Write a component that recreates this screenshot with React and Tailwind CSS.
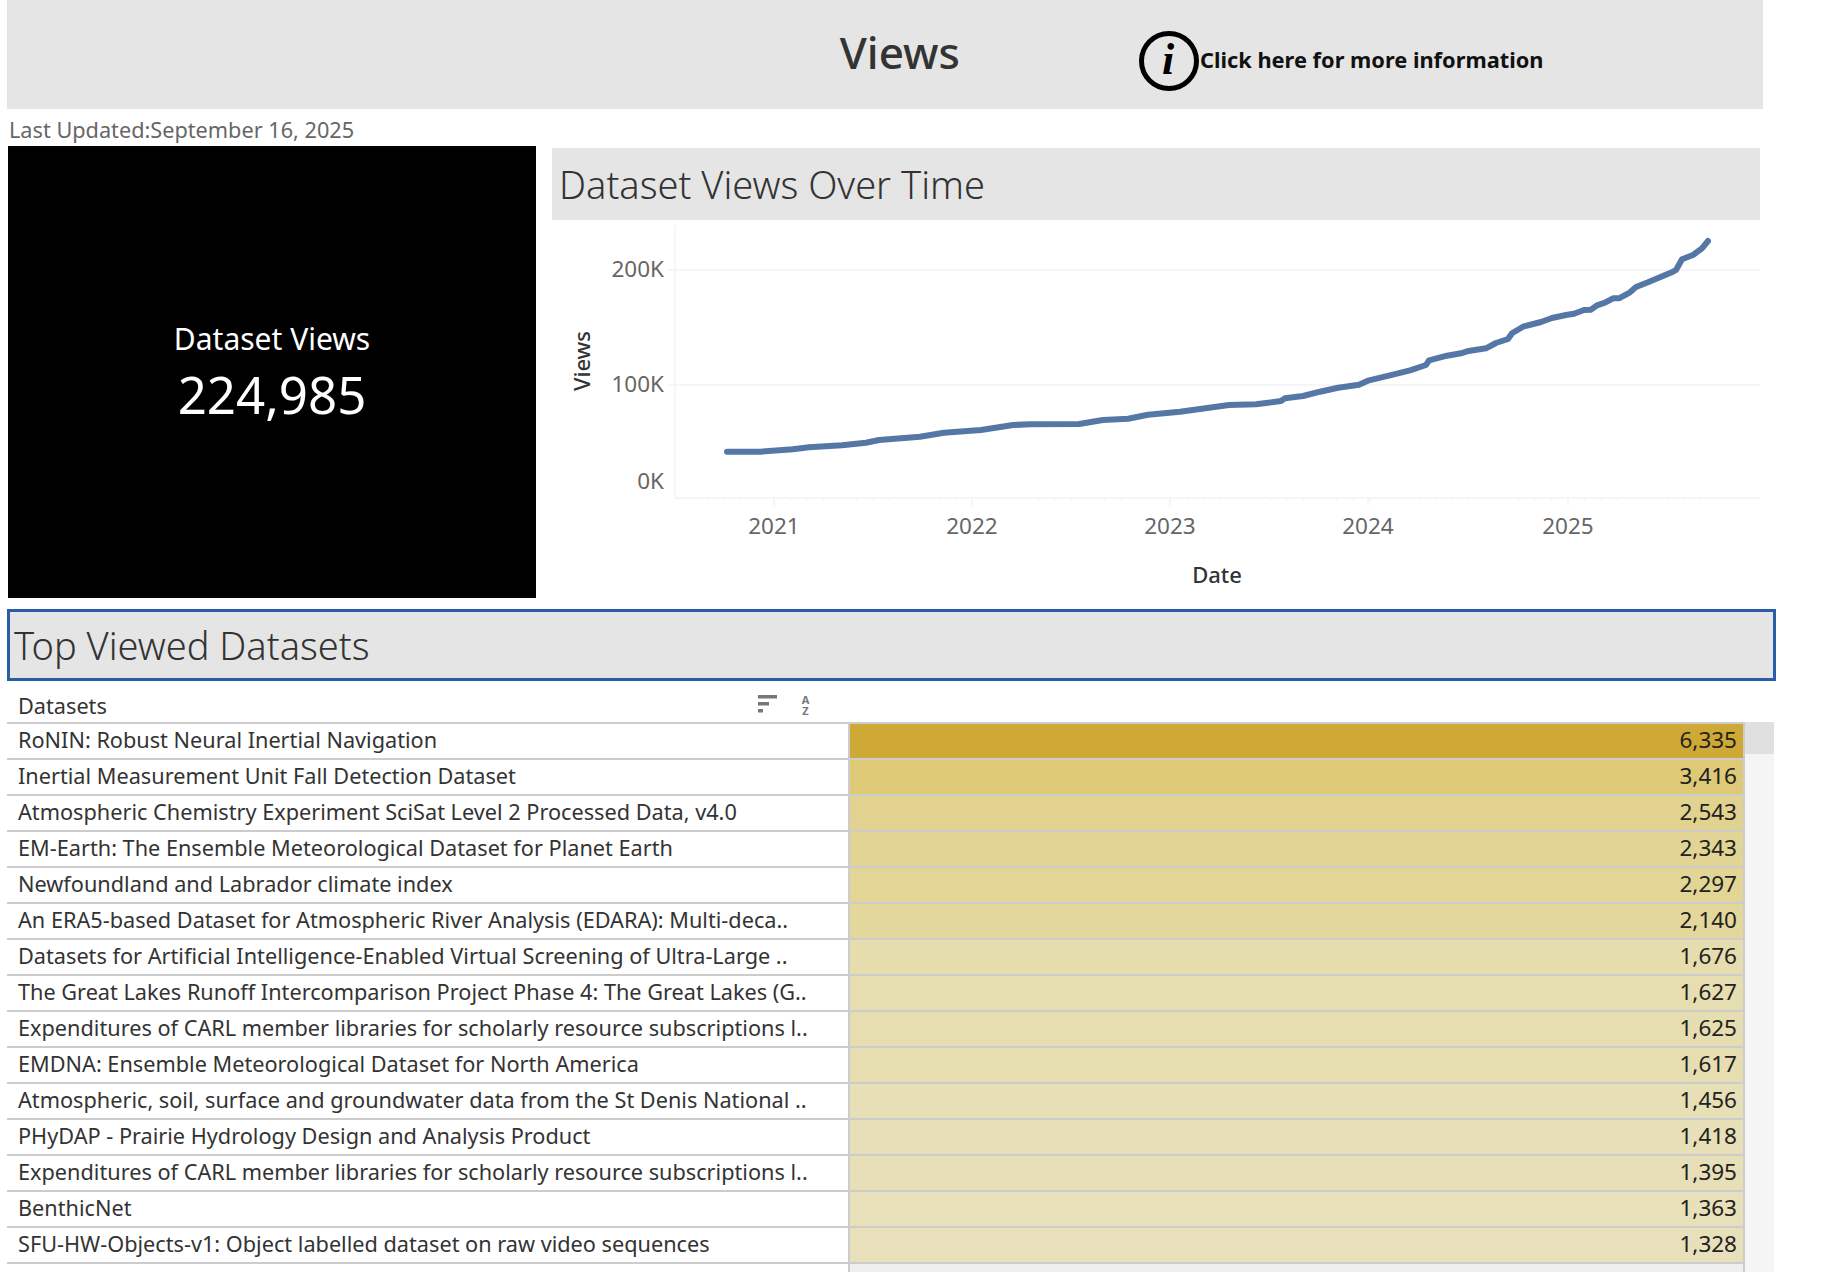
import React from 'react';

const font = "font-['Noto_Sans',sans-serif]";

const linePoints = [
    [727, 451.7], [760, 451.7], [793, 449.3], [809, 447.3], [842, 445.3], [866, 442.7], [879, 440], [920, 436.7],
    [944, 432.7], [981, 430], [1013, 425], [1030, 424.3], [1079, 424], [1103, 420], [1128, 418.7], [1148, 414.7],
    [1180, 411.7], [1200, 409], [1229, 405], [1256, 404.3], [1281, 401], [1285, 398.3], [1303, 396], [1320, 391.7],
    [1338, 387.7], [1359, 384.7], [1369, 380.3], [1394, 374.3], [1410, 370.3], [1426, 365], [1429, 360.3], [1447, 355.7],
    [1461, 353.3], [1467, 351.3], [1486, 348.3], [1496, 343], [1508, 339], [1512, 333.3], [1523, 326.7], [1541, 322],
    [1552, 318], [1566, 315], [1574, 313.7], [1584, 310], [1591, 309.7], [1597, 305.3], [1605, 302.7], [1613, 298.3],
    [1619, 298.3], [1630, 292.3], [1636, 287], [1648, 282.3], [1673, 271.7], [1676, 270], [1682, 259.3], [1693, 255],
    [1702, 248.3], [1708, 241],
];

const years = [[774, '2021'], [972, '2022'], [1170, '2023'], [1368, '2024'], [1568, '2025']];
const minorTicks = Array.from({ length: 64 }, (_, i) => 691 + i * 16.55);

const rows = [
    ['RoNIN: Robust Neural Inertial Navigation', '6,335', 'bg-[#cfa936]'],
    ['Inertial Measurement Unit Fall Detection Dataset', '3,416', 'bg-[#dec976]'],
    ['Atmospheric Chemistry Experiment SciSat Level 2 Processed Data, v4.0', '2,543', 'bg-[#e1d28f]'],
    ['EM-Earth: The Ensemble Meteorological Dataset for Planet Earth', '2,343', 'bg-[#e2d494]'],
    ['Newfoundland and Labrador climate index', '2,297', 'bg-[#e2d595]'],
    ['An ERA5-based Dataset for Atmospheric River Analysis (EDARA): Multi-deca..', '2,140', 'bg-[#e3d79b]'],
    ['Datasets for Artificial Intelligence-Enabled Virtual Screening of Ultra-Large ..', '1,676', 'bg-[#e6ddae]'],
    ['The Great Lakes Runoff Intercomparison Project Phase 4: The Great Lakes (G..', '1,627', 'bg-[#e6ddb0]'],
    ['Expenditures of CARL member libraries for scholarly resource subscriptions l..', '1,625', 'bg-[#e6ddb0]'],
    ['EMDNA: Ensemble Meteorological Dataset for North America', '1,617', 'bg-[#e6ddb0]'],
    ['Atmospheric, soil, surface and groundwater data from the St Denis National ..', '1,456', 'bg-[#e7dfb6]'],
    ['PHyDAP - Prairie Hydrology Design and Analysis Product', '1,418', 'bg-[#e7dfb7]'],
    ['Expenditures of CARL member libraries for scholarly resource subscriptions l..', '1,395', 'bg-[#e7dfb8]'],
    ['BenthicNet', '1,363', 'bg-[#e8e0b9]'],
    ['SFU-HW-Objects-v1: Object labelled dataset on raw video sequences', '1,328', 'bg-[#e8e0ba]'],
];

const ViewsChart = () => (
    <svg viewBox="552 220 1211 378" className="w-[1211px] h-[378px] block">
        <g stroke="#f3f3f3" strokeWidth="1.5" fill="none">
            <line x1="675" y1="225" x2="675" y2="498" />
            <line x1="675" y1="498" x2="1760" y2="498" />
            <line x1="668" y1="270" x2="1760" y2="270" />
            <line x1="668" y1="385" x2="1760" y2="385" />
            {minorTicks.map((x) => <line key={x} x1={x} y1="498" x2={x} y2="501" strokeWidth="1" />)}
            {years.map(([x]) => <line key={x} x1={x} y1="498" x2={x} y2="506" />)}
        </g>
        <polyline
            points={linePoints.map((p) => p.join(',')).join(' ')}
            fill="none"
            stroke="#5577a6"
            strokeWidth="6"
            strokeLinecap="round"
            strokeLinejoin="round"
        />
        <g fill="#666666" fontSize="22.5" fontFamily="Noto Sans, sans-serif">
            <text x="664" y="277" textAnchor="end">200K</text>
            <text x="664" y="392" textAnchor="end">100K</text>
            <text x="664" y="489" textAnchor="end">0K</text>
            {years.map(([x, label]) => <text key={label} x={x} y="534" textAnchor="middle">{label}</text>)}
        </g>
        <text x="1217" y="583" textAnchor="middle" fontSize="22" fontWeight="500" fill="#333333" fontFamily="Noto Sans, sans-serif">Date</text>
        <text x="590" y="361" textAnchor="middle" fontSize="22" fontWeight="500" fill="#333333" fontFamily="Noto Sans, sans-serif" transform="rotate(-90 590 361)">Views</text>
    </svg>
);

const App = () => {
    return (
        <div className={`${font} w-[1824px] h-[1272px] overflow-hidden bg-white`}>
            {/* Page header */}
            <div className="ml-[7px] w-[1756px] h-[109px] bg-[#e5e5e5] flex">
                <div className="w-[1132px] pr-[179px] h-[104px] flex items-center justify-end">
                    <h1 className="text-[44px] font-medium text-[#333333] leading-none">Views</h1>
                </div>
                <div className="flex items-center h-[121px]">
                    <svg viewBox="0 0 60 60" className="w-[60px] h-[60px] block">
                        <ellipse cx="30" cy="30" rx="27.5" ry="27.5" fill="none" stroke="#000000" strokeWidth="5" />
                        <text x="29" y="43" textAnchor="middle" fontSize="44" fontWeight="bold" fontStyle="italic" fontFamily="Liberation Serif, serif" fill="#000000">i</text>
                    </svg>
                    <span className="ml-px mb-px text-[21.8px] font-bold text-[#111111] leading-none whitespace-nowrap">Click here for more information</span>
                </div>
            </div>

            <p className="ml-[9px] h-[37px] pt-[7px] text-[21.7px] leading-[27px] text-[#666666]">Last Updated:September 16, 2025</p>

            <div className="flex h-[452px]">
                <div className="ml-[8px] w-[528px] h-full pt-[4px] bg-black text-white flex flex-col items-center justify-center">
                    <div className="text-[30px] leading-[36px]">Dataset Views</div>
                    <div className="mt-[4px] text-[51px] leading-[66px]">224,985</div>
                </div>
                <div className="ml-[16px] w-[1211px] pt-[2px]">
                    <div className="w-[1208px] h-[72px] bg-[#e5e5e5] flex items-center pl-[7px]">
                        <h2 className="text-[38px] font-light text-[#333333] leading-none">Dataset Views Over Time</h2>
                    </div>
                    <ViewsChart />
                </div>
            </div>

            <div className="mt-[11px] ml-[7px] w-[1769px] h-[72px] bg-[#e5e5e5] border-[3px] border-[#2a5ca8] flex items-center pl-[4px]">
                <h2 className="text-[38px] font-light text-[#333333] leading-none">Top Viewed Datasets</h2>
            </div>

            {/* Table */}
            <div className="ml-[7px] w-[1769px]">
                <div className="h-[41px] flex items-end w-[1738px] relative">
                    <span className="pl-[11px] text-[21.7px] leading-[32px] text-[#333333]">Datasets</span>
                    <svg viewBox="0 0 20 20" className="absolute left-[751px] top-[13px] w-[20px] h-[20px]" fill="#777777">
                        <rect x="0" y="1" width="19" height="3.5" />
                        <rect x="0" y="8" width="11" height="3.5" />
                        <rect x="0" y="15" width="5" height="3.5" />
                    </svg>
                    <span className="absolute left-[794px] top-[13px] w-[9px] break-all text-[11px] leading-[11px] font-bold text-[#777777] text-center">AZ</span>
                </div>
                <div className="flex">
                    <div className="w-[1738px] border-t-2 border-[#cccccc]">
                        {rows.map(([name, value, color], i) => (
                            <div key={i} className="h-[36px] flex border-b-2 border-[#cccccc]">
                                <div className="w-[841px] pl-[11px] text-[21.7px] leading-[32px] text-[#333333] whitespace-nowrap overflow-hidden">{name}</div>
                                <div className={`flex-1 border-l-2 border-r-2 border-[#cccccc] pr-[6px] text-right text-[22.5px] leading-[32px] text-[#222222] ${color}`}>{value}</div>
                            </div>
                        ))}
                        <div className="h-[10px] flex">
                            <div className="w-[841px]" />
                            <div className="flex-1 border-l-2 border-r-2 border-[#cccccc] bg-[#efefef]" />
                        </div>
                    </div>
                    <div className="w-[29px] bg-[#f5f5f5]">
                        <div className="h-[32px] bg-[#e0e0e0]" />
                    </div>
                </div>
            </div>
        </div>
    );
};

export default App;
